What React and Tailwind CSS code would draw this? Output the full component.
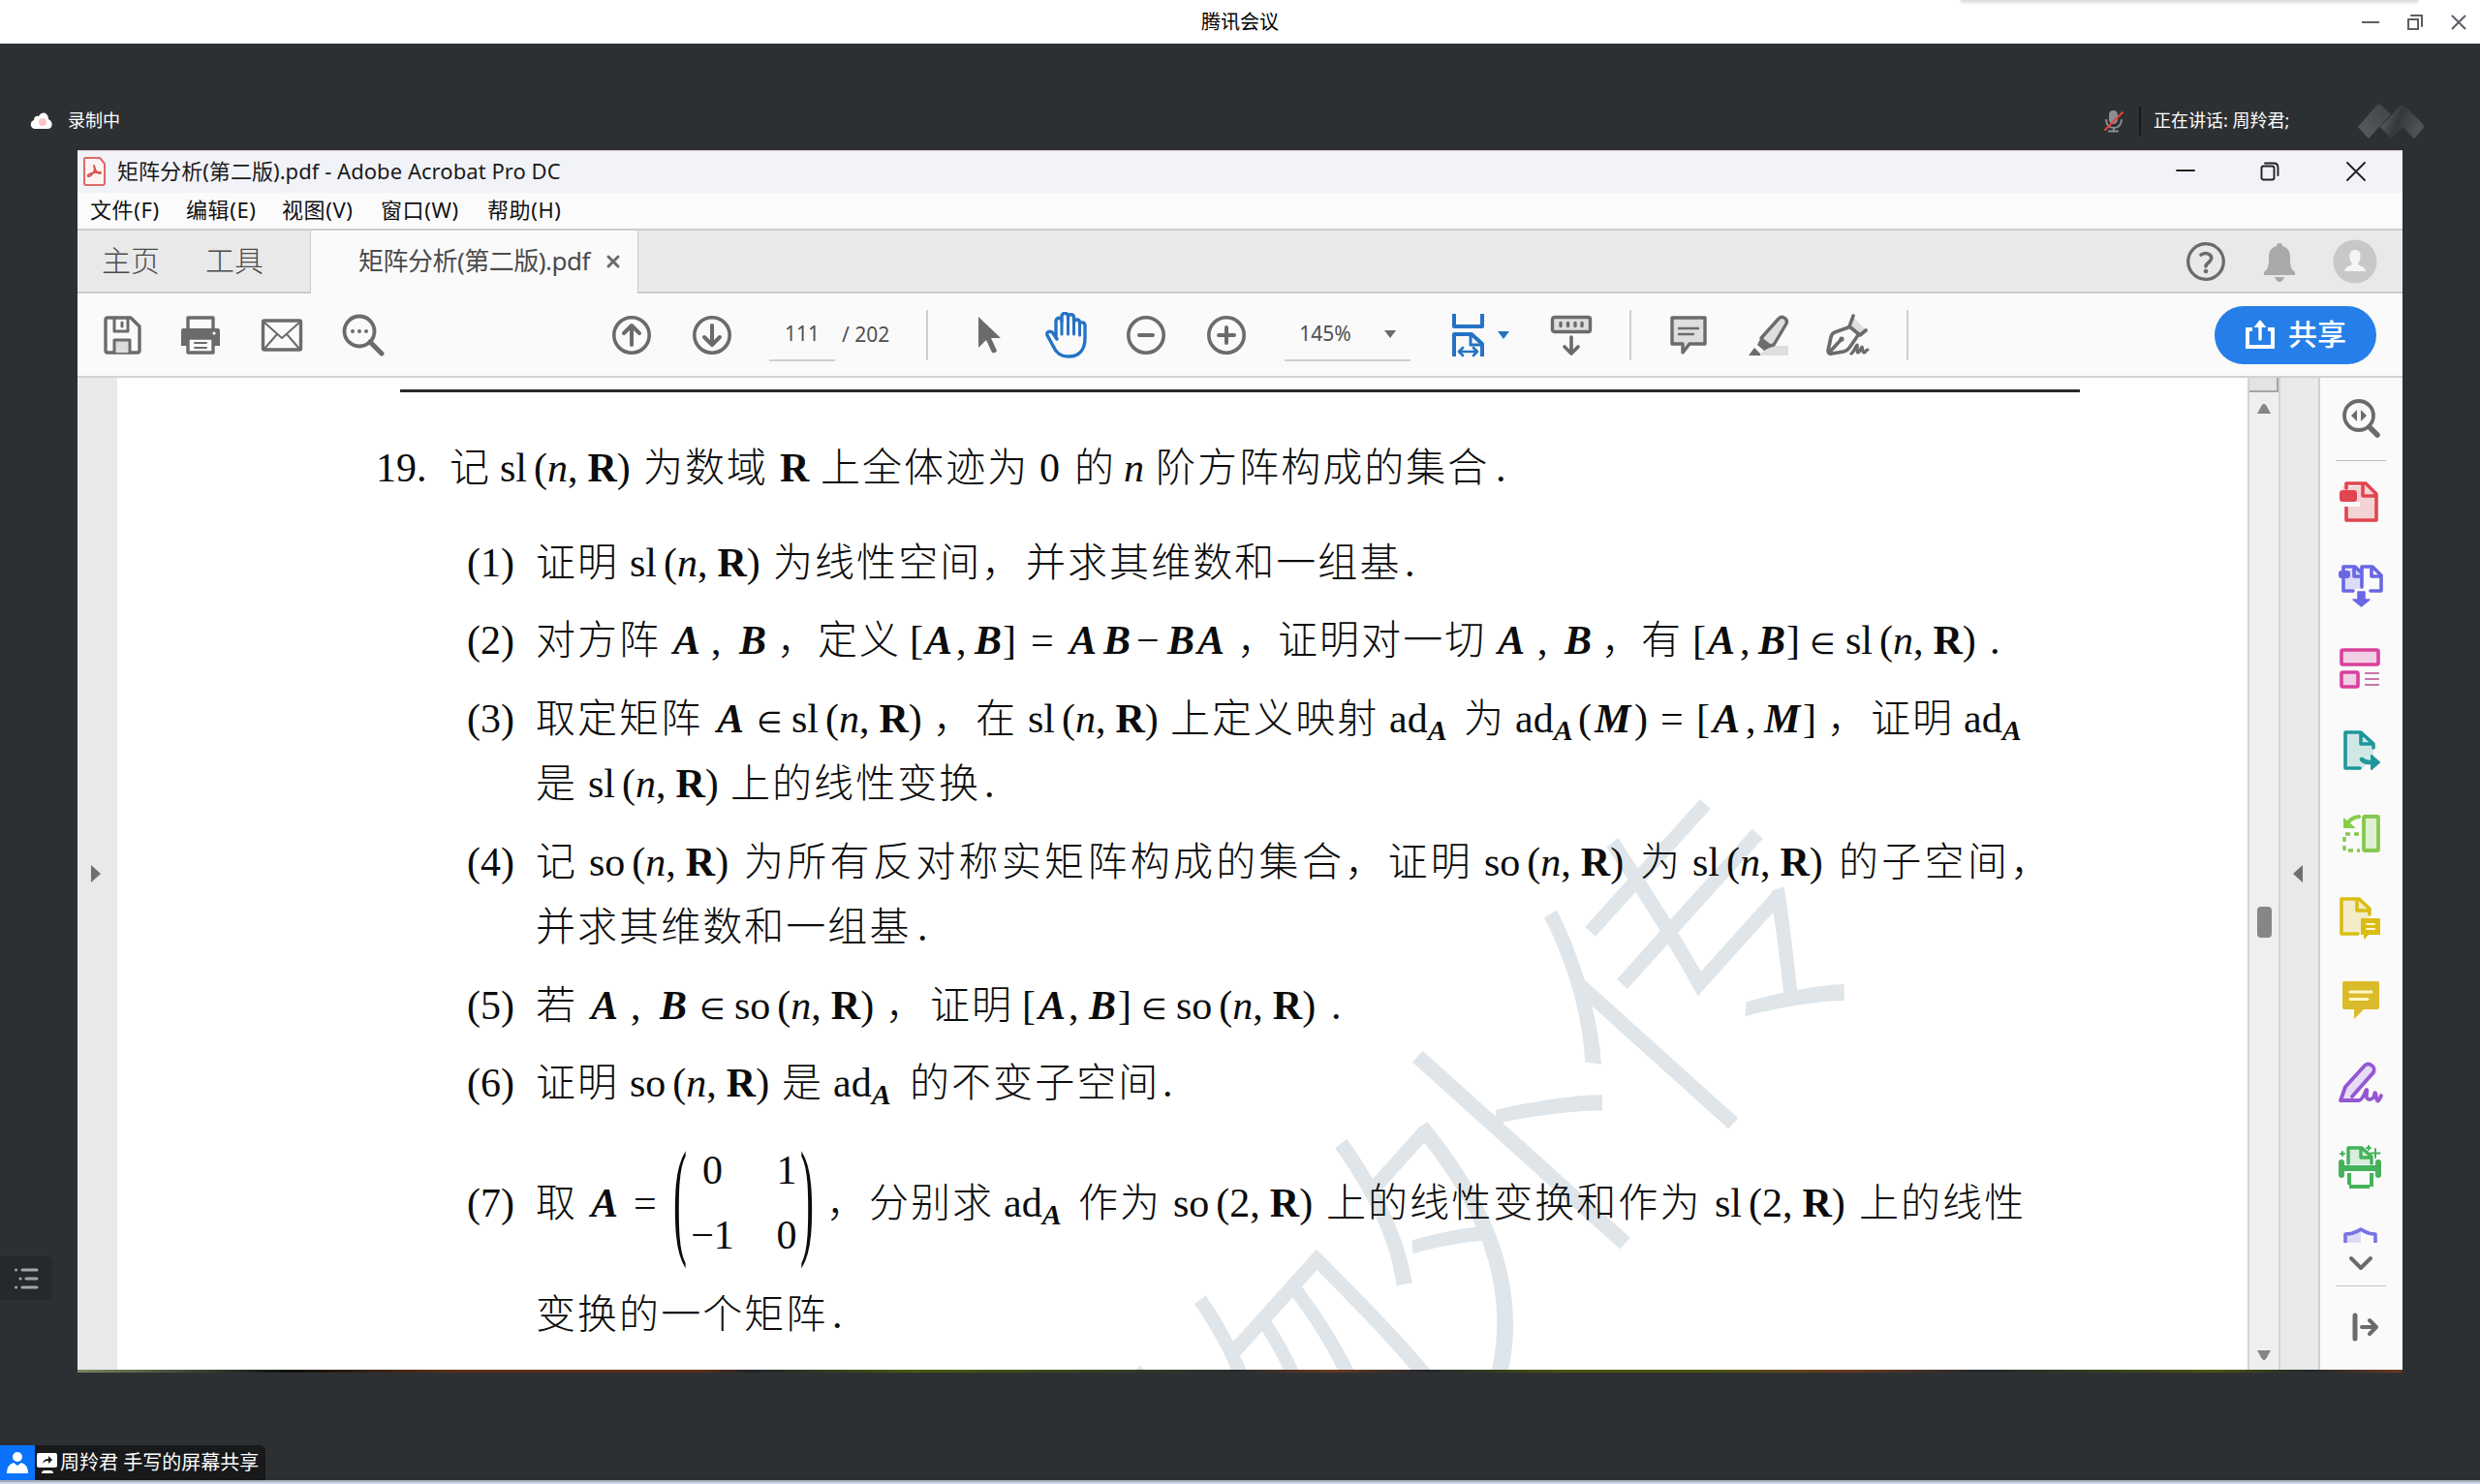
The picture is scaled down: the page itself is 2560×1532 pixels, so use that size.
import React from "react";

const UI = "font-['Noto_Sans','Noto_Sans_CJK_SC',sans-serif]";

/* ---------- document text ---------- */

const CJK = "font-['Noto_Sans_CJK_SC',sans-serif] font-light text-[41px]";

function Group({ name, arg = "n" }) {
  return (
    <span>
      {name}
      <span className="ml-[7px]">(</span>
      {arg === "n" ? <i>n</i> : arg}
      <span>,</span>
      <b className="ml-[10px]">R</b>)
    </span>
  );
}

function Ad() {
  return (
    <span>
      ad
      <b className="relative top-[8px] text-[30px] italic">A</b>
    </span>
  );
}

function Matrix() {
  return (
    <span className="flex h-[60px] items-center">
      <span className="mt-[7px] flex h-[128px] w-[144px] shrink-0 items-center justify-between">
        <span className="inline-block w-[13px] origin-center -translate-y-[6px] scale-y-[3.2] text-[42px]">(</span>
        <span className="grid h-[134px] grid-cols-[52px_25px] grid-rows-2 items-center gap-x-[38px] text-center">
          <span>0</span>
          <span>1</span>
          <span>−1</span>
          <span>0</span>
        </span>
        <span className="inline-block w-[13px] origin-center -translate-y-[6px] scale-y-[3.2] text-[42px]">)</span>
      </span>
    </span>
  );
}

/* kinds: c = Chinese run, w = wider-tracked Chinese run, t = roman, b = bold italic, g = group, a = ad_A, m = matrix */
const LINES = [
  { h: 98, segs: [[388, "t", "19."], [464, "c", "记"], [516, "g", "sl"], [664, "c", "为数域"], [805, "r", "R"], [847, "c", "上全体迹为"], [1073, "t", "0"], [1109, "c", "的"], [1160, "i", "n"], [1193, "c", "阶方阵构成的集合"], [1544, "t", "."]] },
  { h: 80, segs: [[482, "t", "(1)"], [553, "c", "证明"], [650, "g", "sl"], [798, "c", "为线性空间，"], [1059, "c", "并求其维数和一组基"], [1450, "t", "."]] },
  { h: 81, segs: [[482, "t", "(2)"], [553, "c", "对方阵"], [695, "b", "A"], [734, "t", ","], [763, "b", "B"], [802, "c", "，"], [844, "c", "定义"], [939, "t", "["], [955, "b", "A"], [987, "t", ","], [1006, "b", "B"], [1035, "t", "]"], [1064, "t", "="], [1104, "b", "A"], [1139, "b", "B"], [1173, "t", "−"], [1205, "b", "B"], [1236, "b", "A"], [1277, "c", "，"], [1319, "c", "证明对一切"], [1546, "b", "A"], [1587, "t", ","], [1615, "b", "B"], [1653, "c", "，"], [1694, "c", "有"], [1747, "t", "["], [1763, "b", "A"], [1796, "t", ","], [1815, "b", "B"], [1844, "t", "]"], [1868, "e", "∈"], [1905, "g", "sl"], [2054, "t", "."]] },
  { h: 67, segs: [[482, "t", "(3)"], [553, "c", "取定矩阵"], [740, "b", "A"], [781, "e", "∈"], [817, "g", "sl"], [963, "c", "，"], [1007, "c", "在"], [1061, "g", "sl"], [1208, "c", "上定义映射"], [1434, "a"], [1511, "c", "为"], [1564, "a"], [1629, "t", "("], [1646, "b", "M"], [1687, "t", ")"], [1714, "t", "="], [1751, "t", "["], [1768, "b", "A"], [1802, "t", ","], [1821, "b", "M"], [1861, "t", "]"], [1886, "c", "，"], [1931, "c", "证明"], [2027, "a"]] },
  { h: 81, segs: [[553, "c", "是"], [607, "g", "sl"], [754, "c", "上的线性变换"], [1016, "t", "."]] },
  { h: 67, segs: [[482, "t", "(4)"], [553, "c", "记"], [608, "g", "so"], [768, "w", "为所有反对称实矩阵构成的集合，证明"], [1532, "g", "so"], [1693, "c", "为"], [1747, "g", "sl"], [1898, "w", "的子空间，"]] },
  { h: 81, segs: [[553, "c", "并求其维数和一组基"], [947, "t", "."]] },
  { h: 80, segs: [[482, "t", "(5)"], [553, "c", "若"], [610, "b", "A"], [651, "t", ","], [681, "b", "B"], [722, "e", "∈"], [758, "g", "so"], [914, "c", "，"], [960, "c", "证明"], [1055, "t", "["], [1072, "b", "A"], [1103, "t", ","], [1124, "b", "B"], [1154, "t", "]"], [1178, "e", "∈"], [1214, "g", "so"], [1374, "t", "."]] },
  { h: 124, segs: [[482, "t", "(6)"], [553, "c", "证明"], [650, "g", "so"], [807, "c", "是"], [860, "a"], [939, "c", "的不变子空间"], [1200, "t", "."]] },
  { h: 115, segs: [[482, "t", "(7)"], [553, "c", "取"], [610, "b", "A"], [654, "t", "="], [695, "m"], [853, "c", "，"], [897, "c", "分别求"], [1036, "a"], [1113, "c", "作为"], [1211, "g2", "so"], [1369, "c", "上的线性变换和作为"], [1770, "g2", "sl"], [1919, "c", "上的线性"]] },
  { h: 60, segs: [[553, "c", "变换的一个矩阵"], [859, "t", "."]] },
];

function Seg({ kind, text }) {
  switch (kind) {
    case "c": return <span className={`${CJK} tracking-[2.05px]`}>{text}</span>;
    case "w": return <span className={`${CJK} tracking-[3.3px]`}>{text}</span>;
    case "b": return <b className="italic">{text}</b>;
    case "i": return <i>{text}</i>;
    case "r": return <b>{text}</b>;
    case "e": return <span className="font-['DejaVu_Sans',sans-serif] text-[30px]">{text}</span>;
    case "g": return <Group name={text} />;
    case "g2": return <Group name={text} arg="2" />;
    case "a": return <Ad />;
    case "m": return <Matrix />;
    default: return <span>{text}</span>;
  }
}

function Line({ h, segs }) {
  return (
    <div className="flex shrink-0 items-baseline" style={{ height: h, paddingLeft: segs[0][0] - 121 }}>
      {segs.map(([x, kind, text], i) => (
        <span
          key={i}
          className={
            kind === "m"
              ? "h-[60px] shrink-0 self-start whitespace-nowrap leading-[60px]"
              : "flex shrink-0 items-baseline whitespace-nowrap leading-[60px]"
          }
          style={{ width: i + 1 < segs.length ? segs[i + 1][0] - x : undefined }}
        >
          <Seg kind={kind} text={text} />
        </span>
      ))}
    </div>
  );
}

function Page() {
  return (
    <div className="relative flex w-[2199px] shrink-0 flex-col overflow-hidden bg-white">
      <div className="pointer-events-none absolute left-[1044px] top-[551px] w-[930px] -rotate-[48deg] whitespace-nowrap font-['Noto_Sans_CJK_SC',sans-serif] text-[318px] font-light leading-[310px] tracking-[-7px] text-[#dfe5e9]">
        <span className="-ml-[160px]">物外传</span>
      </div>
      <div className="relative ml-[292px] mt-[12px] h-[3px] w-[1734px] shrink-0 bg-[#2b2b2b]" />
      <div className="relative mt-[44px] flex flex-col font-['Liberation_Serif',serif] text-[42px] text-[#0c0c0c]">
        {LINES.map((l, i) => <Line key={i} {...l} />)}
      </div>
    </div>
  );
}

/* ---------- icons ---------- */

function Ico({ w = 48, h = 48, className = "", children }) {
  return (
    <svg width={w} height={h} viewBox={`0 0 ${w} ${h}`} fill="none" strokeLinecap="round" strokeLinejoin="round" className={`shrink-0 ${className}`}>
      {children}
    </svg>
  );
}

const G = "#6b6b6b";
const B = "#2573c4";

const Save = () => (
  <Ico w={40} h={40} className="ml-[27px]">
    <path d="M2 4q0-2 2-2h24l9 9v25q0 2-2 2H4q-2 0-2-2z" stroke={G} strokeWidth="3.4" />
    <path d="M11 2v14h14V2M19 7v4" stroke={G} strokeWidth="3" />
    <path d="M11 38V25h16v13" fill="#dcdcdc" stroke={G} strokeWidth="3" />
  </Ico>
);
const Print = () => (
  <Ico w={42} h={42} className="ml-[39px]">
    <path d="M8 14V3h26v11" stroke={G} strokeWidth="3.4" />
    <path d="M3 14h36q2 0 2 3v15H1V17q0-3 2-3z" fill={G} />
    <path d="M8 24h26v15H8z" fill="#fafafa" stroke={G} strokeWidth="3.4" />
    <path d="M15 29h12M15 34h12" stroke={G} strokeWidth="2" />
    <circle cx="35" cy="19" r="1.6" fill="#fafafa" />
  </Ico>
);
const Mail = () => (
  <Ico w={44} h={36} className="ml-[41px]">
    <rect x="2.5" y="3" width="39" height="30" rx="1.5" stroke={G} strokeWidth="3.4" />
    <path d="M4 5l18 16L40 5M4 32l13-15M40 32L27 17" stroke={G} strokeWidth="2" />
  </Ico>
);
const Find = () => (
  <Ico w={44} h={44} className="ml-[40px]">
    <circle cx="18" cy="18" r="15.5" stroke={G} strokeWidth="3.8" />
    <path d="M29 29l12 12" stroke={G} strokeWidth="5" />
    <circle cx="11" cy="18" r="2" fill={G} /><circle cx="18" cy="18" r="2" fill={G} /><circle cx="25" cy="18" r="2" fill={G} />
  </Ico>
);
const Circle = ({ d, w = "4", className }) => (
  <Ico w={42} h={42} className={className}>
    <circle cx="21" cy="21" r="18.2" stroke={G} strokeWidth="3.6" />
    <path d={d} stroke={G} strokeWidth={w} />
  </Ico>
);
const Cursor = () => (
  <Ico w={26} h={42} className="ml-[50px]">
    <path d="M2 2v32l8-8 6 13q4 1 5-2l-6-13h10z" fill={G} />
  </Ico>
);
const Hand = () => (
  <Ico w={46} h={48} className="ml-[44px]">
    <path d="M12 27V10c0-5 6-5 6 0V5c0-5 6.500-5 6.500 0v1c0-4.500 6-4.500 6 0v5c0-4 6-4 6 0C38 11 42 10 42 14v13c0 12-6 19-17 19-9 0-13-4-16-11L3 24c-1-4 4-5 6-2l4 6" stroke={B} strokeWidth="3.4" />
    <path d="M18 9v14M24.500 7v16M30.500 9v14M36.500 12v12" stroke={B} strokeWidth="3" />
  </Ico>
);
const Fit = () => (
  <Ico w={36} h={48} className="ml-[42px]">
    <path d="M3 2v13h29V2" stroke={B} strokeWidth="4" strokeLinecap="butt" />
    <path d="M3 46V23h18l11 10v13" stroke={B} strokeWidth="4" strokeLinecap="butt" />
    <path d="M20 23v11h11" stroke={B} strokeWidth="3" />
    <path d="M8 41h19M12 37l-4 4 4 4M23 37l4 4-4 4" stroke={B} strokeWidth="2.600" />
  </Ico>
);
const Keyboard = () => (
  <Ico w={44} h={44} className="ml-[41px]">
    <rect x="2.500" y="3.500" width="39" height="15" rx="2" fill="#dedede" stroke={G} strokeWidth="3.400" />
    <path d="M11 9.500v3M18.500 9.500v3M26 9.500v3M33 9.500v3" stroke={G} strokeWidth="3.400" />
    <path d="M22 24v16M15 34l7 7 7-7" stroke={G} strokeWidth="3.600" />
  </Ico>
);
const Note = () => (
  <Ico w={40} h={44} className="ml-[39px]">
    <path d="M3 4h34v27H21l-7 9v-9H3z" fill="#dedede" stroke={G} strokeWidth="3.400" />
    <path d="M10 15h20M10 21h15" stroke={G} strokeWidth="2.400" />
  </Ico>
);
const Marker = () => (
  <Ico w={44} h={44} className="ml-[41px]">
    <path d="M20 33h22v10H12z" fill="#dedede" />
    <path d="M14 25L32 5c3-4 10 0 8 5L27 32l-8 2z" fill="#dedede" stroke={G} strokeWidth="3.400" />
    <path d="M14 24l12 9-9 5-7-6zM7 35l6 6v2H1z" fill={G} />
  </Ico>
);
const Pen = () => (
  <Ico w={46} h={44} className="ml-[37px]">
    <path d="M27 2l-4 11 12 9 6-5z" fill="#dedede" />
    <path d="M28 2l-4 11 11 9 6-5" stroke={G} strokeWidth="3.600" />
    <path d="M23 14L9 19q-3 1-4 5L2 38q0 4 4 3l12-2q4-1 6-4l9-13M4 39l12-13" stroke={G} strokeWidth="3.600" />
    <circle cx="16" cy="26" r="2.600" fill={G} />
    <path d="M26 41c3-2 5-9 6-9s-1 8 1 8 3-6 4-6 0 6 2 6 2-3 4-3" stroke={G} strokeWidth="3.200" />
  </Ico>
);

/* ---------- right rail icons ---------- */

const RAIL = [
  <><path d="M5 13V8h24l11 11v26H8V31" fill="#f4d3d4" /><path d="M9 10V5h20l11 11v27H9V29M26 6v12h12" stroke="#e04650" strokeWidth="3.6" /><path d="M3 24h20v5H3z" fill="#fafafa" /><rect x="2" y="12" width="18" height="12" rx="3" fill="#e04650" /></>,
  <><path d="M6 8h12l8 7v13H6z" fill="#dcdcf7" /><path d="M6 9V5h12l5 5M6 18v12h10M17 6v9h7M25 26V5h11l9 9v16h-11M35 6v9h9" stroke="#6a66e6" strokeWidth="3.600" /><rect x="1" y="9" width="12" height="8" rx="3" fill="#6a66e6" /><path d="M21 31h7v8h5l-8.500 7-8.500-7h5z" stroke="#6a66e6" strokeWidth="1.500" fill="#6a66e6" /></>,
  <><rect x="4" y="5" width="38" height="15" rx="1.500" fill="#f2cfe4" stroke="#d9409b" strokeWidth="3.600" /><rect x="4" y="28" width="17" height="15" rx="1.500" fill="#f2cfe4" stroke="#d9409b" strokeWidth="3.600" /><path d="M29 29h13M29 35h13M29 41h13" stroke="#c874a7" strokeWidth="2.200" /></>,
  <><path d="M8 5h17l12 12v14L25 43H8z" fill="#cfe8e5" /><path d="M23 42H8V5h16l13 12v4M24 6v11h12" stroke="#1f979a" strokeWidth="3.600" /><path d="M25 33q3 3 9 3" stroke="#1f979a" strokeWidth="4.600" /><path d="M35 29l8 7-8 7z" fill="#1f979a" stroke="#1f979a" strokeWidth="2" /></>,
  <><rect x="27" y="6" width="15" height="35" rx="1" fill="#dff0d2" stroke="#86c850" strokeWidth="3.800" /><path d="M22 24H7v17h16" stroke="#86c850" strokeWidth="3.400" strokeDasharray="5 4" strokeLinecap="butt" /><path d="M22 6q-9 1-13 9" stroke="#86cf45" strokeWidth="4" /><path d="M6 7v11h13z" fill="#86cf45" /></>,
  <><path d="M5 5h17l11 10v26H5z" fill="#f4ecc9" /><path d="M21 41H4V5h18l11 10v6M20 6v11h12" stroke="#d9bd12" strokeWidth="3.600" /><path d="M24 25h20v17H32l-5 5v-5h-3z" fill="#d9bd12" /><path d="M30 31h8M30 36h8" stroke="#fff8d0" strokeWidth="2" /></>,
  <><path d="M7 5h34q2 0 2 2v25q0 2-2 2H27l-10 10V34H7q-2 0-2-2V7q0-2 2-2z" fill="#dbbb2b" /><path d="M13 16h22M13 23.500h18" stroke="#fff6c8" strokeWidth="3" /></>,
  <><path d="M4 42l4-14L29 5q5-3 9 4t0 7L16 39z" fill="#e7dbf6" /><path d="M3 42l5-14L28 6c5-4 12 2 9 7L15 38M3 42h19q4-1 7-10 2-3 1 3t3 6 5-5 2 3 5-2" stroke="#9457d2" strokeWidth="3.800" /></>,
  <><path d="M12 22V6h14l10 9v7" fill="#d6eeda" /><path d="M11 21V5h14l10 9v7M24 6v9h9" stroke="#43b25a" strokeWidth="3.400" /><path d="M4 20v13M42 20v13M4 26h38" stroke="#43b25a" strokeWidth="6" /><path d="M12 31v14h23V31" stroke="#43b25a" strokeWidth="4" strokeDasharray="12 2 21 2 14" strokeLinecap="butt" /><path d="M39 6v9M34.500 10.500h9M32 3v4M30 5h4M5 9v4M3 11h4" stroke="#43b25a" strokeWidth="2" /></>,
];

function Rail() {
  return (
    <div className="flex h-full w-[85px] shrink-0 flex-col items-center bg-[#fafafa] pr-[2px]">
      <div className="flex h-[85px] w-full shrink-0 items-center justify-center pb-[2px]">
        <Ico w={44} h={44}>
          <circle cx="20" cy="19" r="15" stroke={G} strokeWidth="3.8" />
          <path d="M32 32l7 7" stroke={G} strokeWidth="5.500" />
          <path d="M18 13v12l-6-6zM22 13v12l6-6z" fill={G} />
        </Ico>
      </div>
      <div className="h-px w-[52px] shrink-0 bg-[#bdbdbd]" />
      {RAIL.map((c, i) => (
        <div key={i} className="flex h-[85.7px] w-full shrink-0 items-center justify-center pb-[1px]">
          <Ico>{c}</Ico>
        </div>
      ))}
      <div className="mt-[20px] h-[16px] shrink-0 overflow-hidden">
        <Ico w={38} h={30}>
          <path d="M4 28V7q9 0 15-5v26z" fill="#dcdcf5" />
          <path d="M3 28V7q9 0 16-5 7 5 15 5v21" stroke="#7674e4" strokeWidth="3.600" />
        </Ico>
      </div>
      <Ico w={28} h={18} className="mt-[13px]">
        <path d="M4 3l10 10L24 3" stroke={G} strokeWidth="4" />
      </Ico>
      <div className="mt-[13px] h-px w-[52px] shrink-0 bg-[#c4c4c4]" />
      <Ico w={32} h={36} className="ml-[10px] mt-[25px]">
        <path d="M5 5v24" stroke={G} strokeWidth="5" />
        <path d="M12 17h15M20 10l7 7-7 7" stroke={G} strokeWidth="4" />
      </Ico>
    </div>
  );
}

/* ---------- Acrobat chrome ---------- */

function TitleBar() {
  return (
    <div className="flex h-[44px] shrink-0 items-center border-t border-[#d9cfd8] bg-[#f2f3f8] pb-[2px] text-[#1a1a1a]">
      <Ico w={26} h={32} className="ml-[5px]">
        <path d="M2 3q0-1 1-1h15l5 6v20q0 2-2 2H4q-2 0-2-2z" fill="#fdf3f2" stroke="#dd6b66" strokeWidth="2" />
        <path d="M12 10c3 5-4 12-6 11s4-5 13-4c0 3-6 0-7-7z" stroke="#d9534d" strokeWidth="1.800" />
      </Ico>
      <span className="ml-[10px] whitespace-nowrap text-[22px] tracking-[0.05px]">矩阵分析(第二版).pdf - Adobe Acrobat Pro DC</span>
      <div className="ml-auto flex items-center">
        <Ico w={20} h={20} className="mr-[67px]"><path d="M1 9h18" stroke="#222" strokeWidth="1.800" /></Ico>
        <Ico w={20} h={20} className="mr-[69px]">
          <rect x="1.500" y="4.500" width="13" height="14" rx="2" stroke="#222" strokeWidth="1.900" />
          <path d="M5 1.500h9q4.500 0 4.500 4.500v8" stroke="#222" strokeWidth="1.900" />
        </Ico>
        <Ico w={20} h={20} className="mr-[38px]"><path d="M1 1l18 18M19 1L1 19" stroke="#222" strokeWidth="1.900" /></Ico>
      </div>
    </div>
  );
}

function MenuBar() {
  return (
    <div className="flex h-[37px] shrink-0 items-center bg-[#fbfbfc] pb-[2px] pl-[13px] text-[22px] tracking-[0.6px] text-[#111]">
      <span className="w-[99px]">文件(F)</span>
      <span className="w-[99px]">编辑(E)</span>
      <span className="w-[102px]">视图(V)</span>
      <span className="w-[110px]">窗口(W)</span>
      <span>帮助(H)</span>
    </div>
  );
}

function TabStrip() {
  return (
    <div className="flex h-[67px] shrink-0 border-t-2 border-[#cdcdcd] bg-[#e9e9e9] text-[#4b4b4b]">
      <div className="flex w-[241px] items-center border-b-2 border-r border-[#cbcbcb] pb-[2px] pl-[25px] text-[30px] font-light">
        <span className="w-[107px]">主页</span>
        <span>工具</span>
      </div>
      <div className="flex w-[337px] items-center bg-[#fafafa] pb-[2px] pl-[49px] text-[26px]">
        <span className="w-[255px] whitespace-nowrap tracking-[-0.5px]">矩阵分析(第二版).pdf</span>
        <Ico w={16} h={16}><path d="M3 3l10 10M13 3L3 13" stroke={G} strokeWidth="3" /></Ico>
      </div>
      <div className="flex flex-1 items-center justify-end border-b-2 border-l border-[#cbcbcb] pr-[26px]">
        <Ico w={42} h={42}>
          <circle cx="21" cy="21" r="18.300" stroke={G} strokeWidth="3.300" />
          <path d="M16 14q5-3 9 0t-1 8q-3 2-3 4" stroke={G} strokeWidth="3.600" />
          <circle cx="21" cy="31" r="2.300" fill={G} />
        </Ico>
        <Ico w={34} h={42} className="ml-[38px]">
          <path d="M17 2c2 0 3 1 3 3 7 2 8 7 8 13 0 8 1 11 5 14v3H1v-3c4-3 5-6 5-14 0-6 1-11 8-13 0-2 1-3 3-3zM12 37h10q-2 5-5 5t-5-5z" fill="#a9a9a9" />
        </Ico>
        <Ico w={46} h={46} className="ml-[38px]">
          <circle cx="23" cy="23" r="22.500" fill="#c8c8c8" />
          <path d="M23 11c8 0 6 11 3 14 0 3 7 2 8 8H12c1-6 8-5 8-8-3-3-5-14 3-14z" fill="#f5f5f5" />
        </Ico>
      </div>
    </div>
  );
}

const Divider = ({ className }) => <div className={`h-[52px] w-[2px] shrink-0 bg-[#cfcfcf] ${className}`} />;
const Caret = ({ color, className }) => (
  <Ico w={14} h={10} className={className}><path d="M1 1h12L7 9z" fill={color} /></Ico>
);

function Toolbar() {
  return (
    <div className="flex h-[87px] shrink-0 items-center border-b-2 border-[#d2d2d2] bg-[#fafafa] text-[21px] text-[#4f4f4f]">
      <Save />
      <Print />
      <Mail />
      <Find />
      <Circle className="ml-[234px]" d="M21 31V12M13 19l8-8 8 8" />
      <Circle className="ml-[41px]" d="M21 11v19M13 23l8 8 8-8" />
      <div className="ml-[38px] flex h-[54px] w-[68px] items-center justify-center border-b-2 border-[#cfcfcf]">111</div>
      <span className="ml-[7px] whitespace-nowrap">/ 202</span>
      <Divider className="ml-[38px]" />
      <Cursor />
      <Hand />
      <Circle className="ml-[38px]" d="M14 21h14" w="4" />
      <Circle className="ml-[41px]" d="M13 21h16M21 13v16" w="4" />
      <div className="ml-[39px] flex h-[54px] w-[130px] items-center justify-between border-b-2 border-[#cfcfcf] pl-[15px] pr-[14px]">
        145%
        <Caret color={G} />
      </div>
      <Fit />
      <Caret color={B} className="ml-[11px]" />
      <Keyboard />
      <Divider className="ml-[38px]" />
      <Note />
      <Marker />
      <Pen />
      <Divider className="ml-[37px]" />
      <div className="ml-auto mr-[27px] flex h-[60px] w-[167px] shrink-0 items-center rounded-full bg-[#267fe8] pl-[30px] text-[30px] font-medium text-white">
        <Ico w={34} h={34}>
          <path d="M9 11H4v18h26V11h-5" stroke="#fff" strokeWidth="4" strokeLinecap="butt" strokeLinejoin="miter" />
          <path d="M17 21V6" stroke="#fff" strokeWidth="3.400" />
          <path d="M10.500 9L17 1l6.500 8z" fill="#fff" />
        </Ico>
        <span className="-mt-[2px] ml-[12px]">共享</span>
      </div>
    </div>
  );
}

function Acrobat() {
  return (
    <div className={`ml-[80px] flex w-[2400px] shrink-0 flex-col ${UI}`}>
      <TitleBar />
      <MenuBar />
      <TabStrip />
      <Toolbar />
      <div className="flex h-[1024px] shrink-0 overflow-hidden">
        <div className="flex w-[41px] shrink-0 items-center justify-center bg-[#e9e9ea] pr-[3px]">
          <Ico w={12} h={20}><path d="M1 1l10 9-10 9z" fill="#707070" /></Ico>
        </div>
        <Page />
        <div className="flex w-[34px] shrink-0 flex-col items-center border-x-2 border-[#d3d3d3] bg-[#efefef]">
          <div className="h-[15px] w-full shrink-0 border-b-2 border-r-2 border-[#a5a5a5] bg-[#e3e3e3]" />
          <Ico w={14} h={11} className="mt-[11px]"><path d="M0 11L5 2q2-2 4 0l5 9z" fill="#858585" /></Ico>
          <div className="mt-[509px] h-[32px] w-[15px] shrink-0 rounded-[4px] bg-[#868686]" />
          <Ico w={14} h={11} className="mb-[9px] mt-auto"><path d="M0 0h14L9 9q-2 2-4 0z" fill="#858585" /></Ico>
        </div>
        <div className="flex w-[41px] shrink-0 items-center justify-center border-r-2 border-[#d0d0d0] bg-[#e9e9e9] pr-[3px]">
          <Ico w={12} h={20}><path d="M11 1L1 10l10 9z" fill="#707070" /></Ico>
        </div>
        <Rail />
      </div>
      <div className="h-[3px] shrink-0 bg-[linear-gradient(90deg,#7d8560,#10120f_9%,#5a3018_16%,#5a3018_27%,#20242a_29%,#4a5a10_36%,#2a2c2e_50%,#6a3a20_54%,#24282c_58%,#4a5510_64%,#4a5510_70%,#6a3a20_76%,#24282c_82%,#4a5510_92%,#24282c_96%,#6a3a20)]" />
    </div>
  );
}

/* ---------- meeting window ---------- */

export default function App() {
  return (
    <div className={`flex h-[1532px] w-[2560px] flex-col overflow-hidden bg-[#2d3033] ${UI}`}>
      <div className="relative grid h-[45px] shrink-0 grid-cols-3 items-center bg-white">
        <div className="absolute left-[2024px] top-0 h-[2px] w-[472px] bg-[#e0e0e0] shadow-[0_1px_3px_#d8d8d8]" />
        <span />
        <span className="text-center text-[20px] text-black">腾讯会议</span>
        <div className="flex items-center justify-end pr-[13px]">
          <Ico w={20} h={18}><path d="M1 9h18" stroke="#5b6066" strokeWidth="2" strokeLinecap="butt" /></Ico>
          <Ico w={18} h={18} className="ml-[27px]">
            <path d="M2 6h10v10H2zM5 2h11v11" stroke="#5b6066" strokeWidth="2" strokeLinejoin="miter" />
          </Ico>
          <Ico w={18} h={18} className="ml-[27px]"><path d="M2.500 2.500l13 13M15.500 2.500l-13 13" stroke="#5b6066" strokeWidth="2" /></Ico>
        </div>
      </div>

      <div className="flex h-[110px] shrink-0 items-center pt-[49px] text-[18px] text-white">
        <Ico w={24} h={18} className="ml-[31px]">
          <path d="M6 17c-6 0-7-7-2-9 0-4 3-5 5-4 3-6 10-4 10 3 5 2 5 10-1 10z" fill="#fff" />
          <ellipse cx="13" cy="10" rx="4" ry="4" fill="#fbc4c4" />
        </Ico>
        <span className="ml-[15px] text-[18px]">录制中</span>
        <div className="ml-auto flex items-center">
          <Ico w={24} h={26}>
            <rect x="7" y="2" width="9" height="14" rx="4.500" fill="#8b8e92" />
            <path d="M4 12q1 8 8 8t8-8M12 20v3M7 23.500h9" stroke="#8b8e92" strokeWidth="2" />
            <path d="M3 22L21 4" stroke="#e8433d" strokeWidth="2" />
          </Ico>
          <div className="ml-[14px] h-[30px] w-[2px] bg-[#17191b]" />
          <span className="ml-[13px] w-[140px] whitespace-nowrap text-[18px]">正在讲话: 周羚君;</span>
          <Ico w={70} h={38} className="ml-[70px] mr-[57px]">
            <defs>
              <linearGradient id="a" x1="0" y1="1" x2="1" y2="0"><stop offset="0" stopColor="#5a5c5f" /><stop offset="1" stopColor="#404346" /></linearGradient>
              <linearGradient id="b" x1="0" y1="0" x2="1" y2="0.3"><stop offset="0" stopColor="#68696b" /><stop offset="0.500" stopColor="#35383b" /><stop offset="1" stopColor="#505255" /></linearGradient>
            </defs>
            <path d="M1 25L20 3q3-3 6 0l9 9-23 25z" fill="url(#a)" />
            <path d="M24 25L44 4q3-3 6 0l18 18q2 3 0 5l-9 10-12-12-12 12z" fill="url(#b)" />
          </Ico>
        </div>
      </div>

      <div className="relative">
        <Acrobat />
        <div className="absolute left-0 top-[1142px] flex h-[45px] w-[54px] items-center rounded-r-[6px] bg-[#25292c] pl-[14px]">
          <Ico w={26} h={24}>
            <path d="M9 3h15M13 12h11M9 21h15" stroke="#a3a5a7" strokeWidth="3" />
            <path d="M2.500 3h.1M7 12h.1M2.500 21h.1" stroke="#a3a5a7" strokeWidth="3" />
          </Ico>
        </div>
      </div>

      <div className="mt-auto flex h-[36px] w-[274px] shrink-0 items-center overflow-hidden rounded-tr-[6px] bg-[#17191b] text-white">
        <div className="flex h-full w-[36px] items-center justify-center bg-[#0a72fb]">
          <Ico w={24} h={24}>
            <circle cx="12" cy="6" r="5" fill="#fff" />
            <path d="M1 23q0-9 7-11l4 3 4-3q7 2 7 11z" fill="#fff" />
          </Ico>
        </div>
        <Ico w={22} h={24} className="ml-[2px]">
          <rect x="0" y="2" width="21" height="15" rx="2" fill="#fff" />
          <path d="M5 23q0-3 3-3h6q3 0 3 3z" fill="#fff" />
          <path d="M6 13q1-5 6-5V5l4 4-4 4v-3q-4 0-6 3z" fill="#17191b" />
        </Ico>
        <span className="ml-[2px] whitespace-nowrap text-[20px]">周羚君 手写的屏幕共享</span>
      </div>
      <div className="h-[2px] shrink-0 bg-[#a6adb6]" />
      <div className="h-[2px] shrink-0 bg-[#cbd6ea]" />
    </div>
  );
}
